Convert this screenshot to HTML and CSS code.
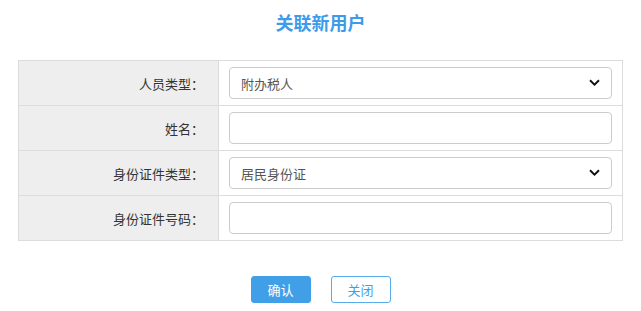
FILE: index.html
```html
<!DOCTYPE html>
<html lang="zh-CN">
<head>
<meta charset="utf-8">
<title>关联新用户</title>
<link rel="stylesheet" href="styles.css">
</head>
<body>
<div class="dialog">
  <h1 class="title">关联新用户</h1>
  <table class="form">
    <tr>
      <th class="label">人员类型：</th>
      <td class="cell">
        <div class="field select">
          <span class="value">附办税人</span>
          <svg class="chev" width="11" height="7" viewBox="0 0 11 7"><path d="M1 1.3 L5.5 5.6 L10 1.3" fill="none" stroke="#111" stroke-width="1.9"/></svg>
        </div>
      </td>
    </tr>
    <tr>
      <th class="label">姓名：</th>
      <td class="cell"><input class="field" type="text"></td>
    </tr>
    <tr>
      <th class="label">身份证件类型：</th>
      <td class="cell">
        <div class="field select">
          <span class="value">居民身份证</span>
          <svg class="chev" width="11" height="7" viewBox="0 0 11 7"><path d="M1 1.3 L5.5 5.6 L10 1.3" fill="none" stroke="#111" stroke-width="1.9"/></svg>
        </div>
      </td>
    </tr>
    <tr>
      <th class="label">身份证件号码：</th>
      <td class="cell"><input class="field" type="text"></td>
    </tr>
  </table>
  <div class="actions">
    <button class="btn primary">确认</button>
    <button class="btn ghost">关闭</button>
  </div>
</div>
</body>
</html>
```
FILE: styles.css
```css
html, body {
  margin: 0;
  padding: 0;
  background: #fff;
}
body {
  font-family: "Noto Sans CJK SC", "Noto Sans", "Liberation Sans", sans-serif;
  font-size: 13px;
  color: #333;
}
.dialog {
  padding: 0 18px;
}
.title {
  margin: 0 0 16px;
  height: 44px;
  line-height: 44px;
  text-align: center;
  font-size: 18px;
  font-weight: bold;
  color: #3d9be9;
}
.form {
  width: 100%;
  border-collapse: collapse;
  border: 1px solid #dcdcdc;
}
.form tr {
  height: 45px;
}
.label {
  width: 185px;
  padding: 0 14px 0 0;
  background: #eeeeee;
  border: 1px solid #dcdcdc;
  text-align: right;
  font-weight: normal;
  color: #333;
  white-space: nowrap;
}
.cell {
  padding: 0 10px;
  border: 1px solid #dcdcdc;
}
.field {
  box-sizing: border-box;
  display: block;
  width: 100%;
  height: 32px;
  margin: 0;
  padding: 0 11px;
  border: 1px solid #cccccc;
  border-radius: 4px;
  background: #fff;
  font-family: inherit;
  font-size: 13px;
  color: #555;
}
.select {
  display: flex;
  align-items: center;
  justify-content: space-between;
  padding-right: 11px;
}
.chev {
  display: block;
  margin-top: -2px;
}
.actions {
  display: flex;
  justify-content: center;
  gap: 20px;
  margin-top: 35px;
}
.btn {
  box-sizing: border-box;
  width: 60px;
  height: 27px;
  padding: 0;
  border-radius: 3px;
  font-family: inherit;
  font-size: 13px;
  cursor: pointer;
}
.primary {
  background: #419fe8;
  border: 1px solid #419fe8;
  color: #fff;
}
.ghost {
  background: #fff;
  border: 1px solid #57abeb;
  color: #419fe8;
}
```
